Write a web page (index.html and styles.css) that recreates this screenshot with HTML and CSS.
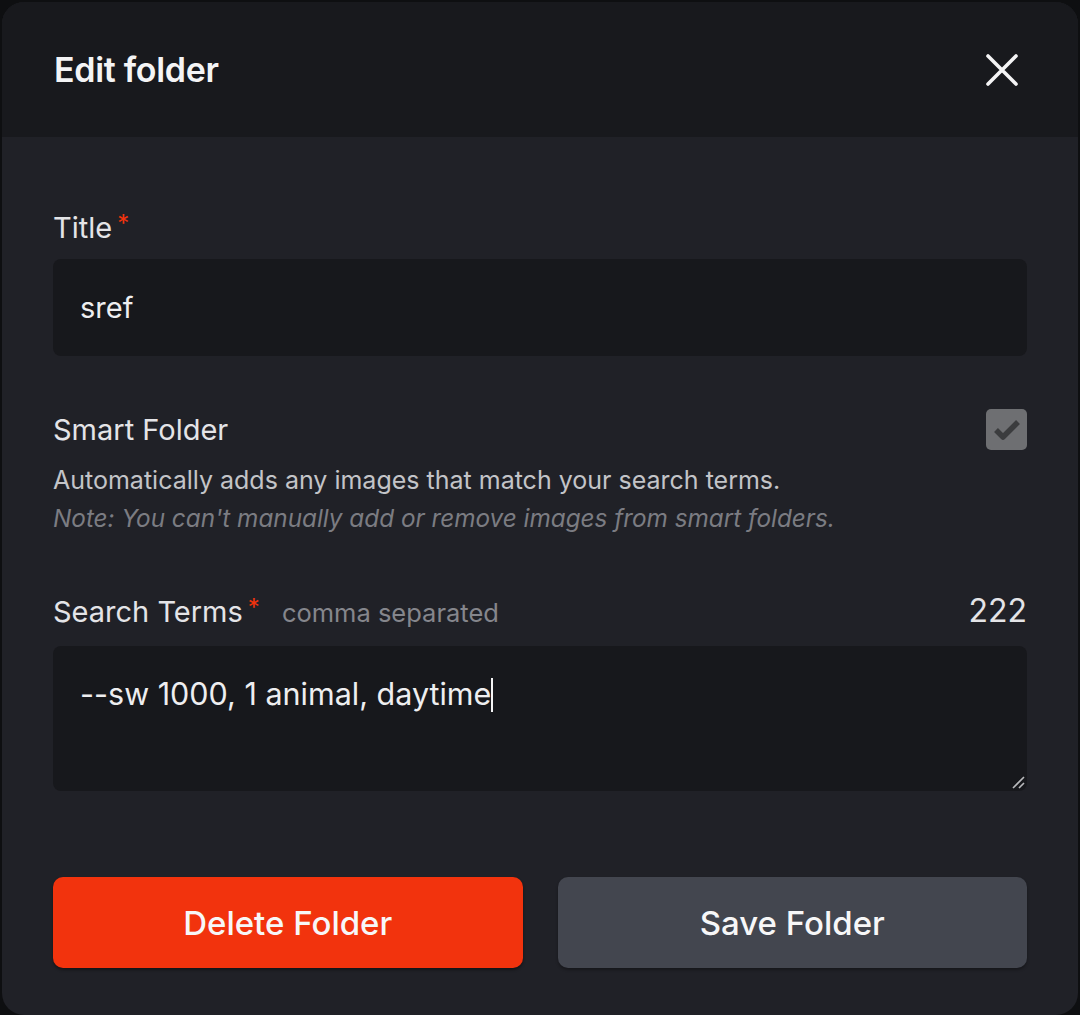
FILE: index.html
```html
<!DOCTYPE html>
<html>
<head>
  <title>Edit folder</title>
  <link rel="stylesheet" href="styles.css">
</head>
<body>
  <div class="modal">
    <div class="modal-header">
      <h1 class="modal-title">Edit folder</h1>
      <button class="close-btn" title="Close">
        <svg width="32" height="32" viewBox="0 0 32 32"><path d="M2 2 L30 30 M30 2 L2 30" stroke="#f4f4f5" stroke-width="3.6" stroke-linecap="round"/></svg>
      </button>
    </div>
    <div class="modal-body">
      <div class="label-row title-label">
        <span class="label">Title<span class="req">*</span></span>
      </div>
      <div class="field field-input">sref</div>

      <div class="smart-row">
        <span class="label">Smart Folder</span>
        <span class="checkbox">
          <svg width="28" height="24" viewBox="0 0 28 24"><path d="M3 12 L10 19 L25 4" fill="none" stroke="#3b3c3e" stroke-width="5.5" stroke-linejoin="round"/></svg>
        </span>
      </div>
      <p class="desc">Automatically adds any images that match your search terms.</p>
      <p class="desc note">Note: You can't manually add or remove images from smart folders.</p>

      <div class="label-row search-label">
        <span class="label">Search Terms<span class="req">*</span><span class="hint">comma separated</span></span>
        <span class="counter">222</span>
      </div>
      <div class="field field-area">
        <span>--sw 1000, 1 animal, daytime</span><span class="caret"></span>
        <svg class="resize" width="14" height="14" viewBox="0 0 14 14"><path d="M2 13 L13 2 M8 13 L13 8" stroke="#b9babd" stroke-width="1.6"/></svg>
      </div>

      <div class="actions">
        <button class="btn btn-delete">Delete Folder</button>
        <button class="btn btn-save">Save Folder</button>
      </div>
    </div>
  </div>
</body>
</html>
```

FILE: styles.css
```css
* {
  box-sizing: border-box;
}

body {
  margin: 0;
  background: #0e0f11;
  font-family: Inter, "Open Sans", sans-serif;
  overflow: hidden;
}

.modal {
  margin: 2px 2px 0;
  height: 1013px;
  border-radius: 22px;
  background: #202127;
  overflow: hidden;
}

.modal-header {
  height: 135px;
  background: #18191d;
  display: flex;
  align-items: center;
  justify-content: space-between;
  padding: 0 51px 0 52px;
}

.modal-title {
  margin: 0;
  color: #f4f4f5;
  font-size: 34px;
  font-weight: 600;
  letter-spacing: -0.3px;
}

.close-btn {
  background: none;
  border: 0;
  padding: 0;
  margin-right: 9px;
  display: flex;
}

.modal-body {
  padding: 71px 51px 0;
}

.label-row {
  display: flex;
  justify-content: space-between;
  align-items: center;
  height: 36px;
}

.label {
  color: #e4e4e7;
  font-size: 29px;
  font-weight: 400;
  line-height: 36px;
}

.req {
  color: #f2330d;
  font-size: 24px;
  margin-left: 5px;
  vertical-align: 6px;
}

.hint {
  color: #85868c;
  font-size: 25.5px;
  font-weight: 400;
  margin-left: 22px;
}

.counter {
  color: #e4e4e7;
  font-size: 32px;
  font-weight: 400;
}

.field {
  background: #17181c;
  border-radius: 8px;
  color: #eeeef0;
  font-size: 29px;
  padding-left: 27px;
}

.title-label {
  margin-bottom: 15px;
}

.field-input {
  height: 97px;
  display: flex;
  align-items: center;
}

.smart-row {
  margin-top: 53px;
  height: 41px;
  display: flex;
  justify-content: space-between;
  align-items: center;
}

.checkbox {
  width: 41px;
  height: 41px;
  border-radius: 5px;
  background: #6e6f72;
  display: flex;
  align-items: center;
  justify-content: center;
}

.desc {
  margin: 0;
  color: #c3c4c8;
  font-size: 25px;
  line-height: 38px;
}

.desc:first-of-type {
  margin-top: 11px;
}

.note {
  color: #7b7c82;
  font-size: 24.3px;
  font-style: italic;
}

.search-label {
  margin-top: 55px;
  margin-bottom: 18px;
}

.field-area {
  position: relative;
  height: 145px;
  padding-top: 30px;
  font-size: 30.5px;
  line-height: 36px;
}

.caret {
  display: inline-block;
  width: 2px;
  height: 34px;
  background: #f4f4f5;
  vertical-align: -7px;
}

.resize {
  position: absolute;
  right: 2px;
  bottom: 2px;
}

.actions {
  margin-top: 86px;
  display: flex;
  gap: 35px;
}

.btn {
  flex: 1;
  height: 91px;
  border: 0;
  border-radius: 10px;
  font-family: Inter, "Open Sans", sans-serif;
  font-size: 33px;
  font-weight: 500;
  color: #f7f7f8;
}

.btn-delete {
  background: #f2330d;
  box-shadow: 0 2px 3px rgba(0, 0, 0, 0.4);
}

.btn-save {
  background: #43464f;
  box-shadow: 0 2px 3px rgba(0, 0, 0, 0.3);
}
```
